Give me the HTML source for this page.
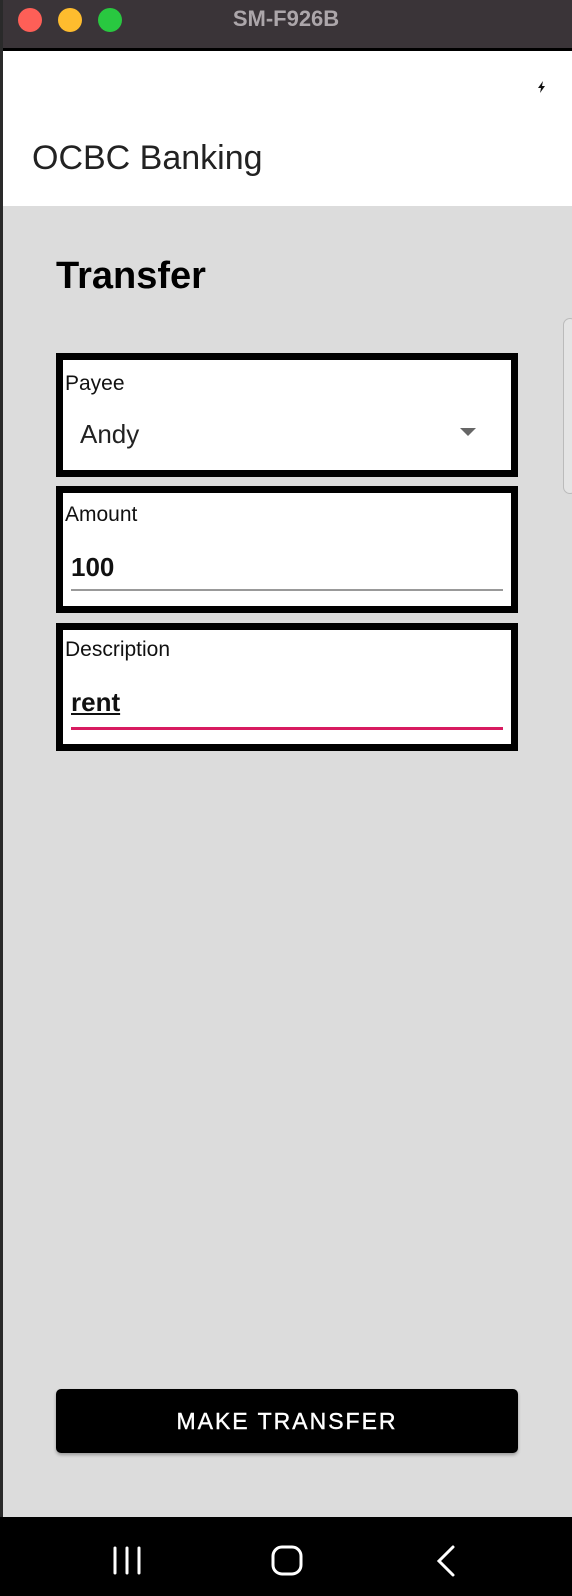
<!DOCTYPE html>
<html><head><meta charset="utf-8"><style>
*{margin:0;padding:0;box-sizing:border-box}
body{width:572px;height:1596px;position:relative;overflow:hidden;background:#dcdcdc;font-family:"Liberation Sans",Roboto,sans-serif}
.abs{position:absolute}
.box{position:absolute;left:56px;width:462px;border:7px solid #000;background:#fff}
.lbl{position:absolute;left:2px;font-size:21px;color:#111}
</style></head><body>
<div class="abs" style="left:0;top:0;width:572px;height:50px;background:#3a3438"></div>
<div class="abs" style="left:0;top:48px;width:572px;height:3px;background:#000"></div>
<div class="abs" style="left:18px;top:8px;width:24px;height:24px;border-radius:50%;background:#fe5f57"></div>
<div class="abs" style="left:58px;top:8px;width:24px;height:24px;border-radius:50%;background:#febc2e"></div>
<div class="abs" style="left:98px;top:8px;width:24px;height:24px;border-radius:50%;background:#29c840"></div>
<div class="abs" style="left:0;top:6px;width:572px;text-align:center;font-weight:bold;font-size:22px;color:#aca6aa">SM-F926B</div>
<div class="abs" style="left:3px;top:51px;width:569px;height:155px;background:#fff"></div>
<svg class="abs" style="left:537px;top:81px" width="10" height="12" viewBox="0 0 10 12"><path d="M6 0L1 7h3l-1 5 5-7H5z" fill="#111"/></svg>
<div class="abs" style="left:32px;top:139px;font-size:34px;color:#222">OCBC Banking</div>
<div class="abs" style="left:0;top:0;width:3px;height:1596px;background:#2a2a2a"></div>
<div class="abs" style="left:56px;top:255px;font-size:38px;font-weight:bold;color:#000">Transfer</div>
<div class="abs" style="left:563px;top:318px;width:14px;height:176px;border:1px solid #bbb;border-radius:7px;background:#e4e4e4"></div>

<div class="box" style="top:353px;height:124px">
<div class="lbl" style="top:12px">Payee</div>
<div class="abs" style="left:17px;top:59px;font-size:26px;color:#222">Andy</div>
<div class="abs" style="left:397px;top:68px;width:0;height:0;border-left:8px solid transparent;border-right:8px solid transparent;border-top:8px solid #666"></div>
</div>
<div class="box" style="top:486px;height:127px">
<div class="lbl" style="top:10px">Amount</div>
<div class="abs" style="left:8px;top:59px;font-size:26px;font-weight:bold;color:#111">100</div>
<div class="abs" style="left:8px;top:96px;width:432px;height:2px;background:#999"></div>
</div>
<div class="box" style="top:623px;height:128px">
<div class="lbl" style="top:8px">Description</div>
<div class="abs" style="left:8px;top:57px;font-size:26px;font-weight:bold;color:#111;text-decoration:underline">rent</div>
<div class="abs" style="left:8px;top:97px;width:432px;height:3px;background:#d81b60"></div>
</div>

<div class="abs" style="left:56px;top:1389px;width:462px;height:64px;background:#000;border-radius:5px;box-shadow:0 2px 3px rgba(0,0,0,.3);color:#fff;font-size:23px;letter-spacing:2px;text-align:center;line-height:64px;-webkit-text-stroke:0.4px #fff">MAKE TRANSFER</div>

<div class="abs" style="left:0;top:1517px;width:572px;height:79px;background:#000"></div>
<svg class="abs" style="left:0;top:1517px" width="572" height="79">
<g stroke="#fff" stroke-width="3" fill="none" stroke-linecap="round">
<path d="M115 31v25M127 31v25M139 31v25"/>
<rect x="273" y="30" width="28" height="27" rx="9"/>
<path d="M453 30l-14 14 14 14"/>
</g></svg>
</body></html>
